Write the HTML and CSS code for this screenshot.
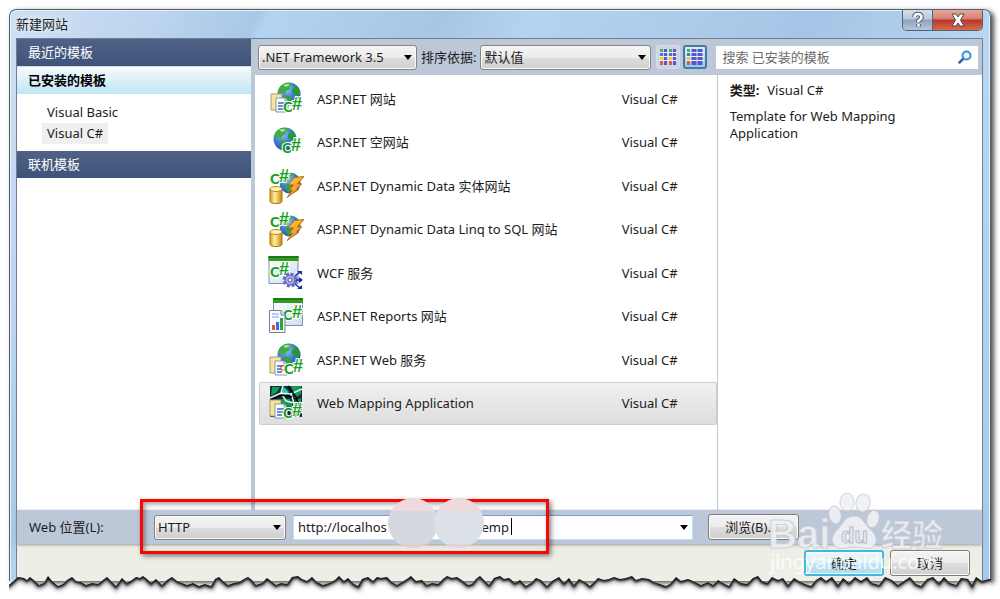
FILE: index.html
```html
<!DOCTYPE html>
<html lang="zh-CN">
<head>
    <meta charset="UTF-8">
    <meta name="viewport" content="width=device-width, initial-scale=1.0">
    <title>新建网站</title>
    <link rel="stylesheet" href="styles.css">
</head>
<body>
    <!-- Shared icon parts -->
    <svg class="defs" width="0" height="0" aria-hidden="true">
        <defs>
            <radialGradient id="sea" cx="40%" cy="30%" r="75%">
                <stop offset="0" stop-color="#8fc4f5"/>
                <stop offset=".5" stop-color="#3f7fd8"/>
                <stop offset="1" stop-color="#1c4fa8"/>
            </radialGradient>
            <linearGradient id="gold">
                <stop offset="0" stop-color="#d99a1c"/>
                <stop offset=".4" stop-color="#fff0a0"/>
                <stop offset="1" stop-color="#c98208"/>
            </linearGradient>
            <linearGradient id="flash" x2="1" y2="1">
                <stop offset="0" stop-color="#ffd84a"/>
                <stop offset="1" stop-color="#e8720c"/>
            </linearGradient>
            <linearGradient id="pane" x2="1" y2="1">
                <stop offset="0" stop-color="#ffffff"/>
                <stop offset="1" stop-color="#cfdcf0"/>
            </linearGradient>
            <symbol id="globe" viewBox="0 0 24 24">
                <circle cx="12" cy="12" r="11.5" fill="url(#sea)"/>
                <path d="M3 5 Q7 0 13 1 L15 3 L12 5 L13 7 L9 9 L8 12 L4 10 L2 12 Q0 9 3 5Z" fill="#3fae3c"/>
                <path d="M16 2 Q22 5 23 11 L21 15 L18 12 L15 11 L15 7 L18 6Z" fill="#279a2c"/>
                <path d="M7 13 L12 14 L15 17 L12 20 L11 23 Q8 21 8 18Z" fill="#36a534"/>
                <path d="M6 3 Q10 1 13 3 L9 5Z" fill="#a9e29a"/>
            </symbol>
            <symbol id="pages" viewBox="0 0 20 20">
                <path d="M1 1H12V17H1Z" fill="#f8e39a" stroke="#a99b78"/>
                <path d="M6 5H15L18 8V19H6Z" fill="#fff" stroke="#8292b8"/>
                <path d="M15 5V8H18" fill="#dbe5f6" stroke="#8292b8"/>
                <path d="M8 10H15M8 13H15M8 16H13" stroke="#3864c8" stroke-width="1.5"/>
            </symbol>
            <symbol id="cylinder" viewBox="0 0 14 18">
                <path d="M1 3V15Q1 17.500 7 17.500T13 15V3Z" fill="url(#gold)" stroke="#a87412"/>
                <ellipse cx="7" cy="3" rx="6" ry="2.500" fill="#fff3b8" stroke="#b8861c"/>
            </symbol>
            <symbol id="bolt" viewBox="0 0 18 22">
                <path d="M9 2L18 1L12 8H16L11 13H13L2 21L7 14H4L8 9H3Z" fill="url(#flash)" stroke="#b85a10" stroke-width=".8"/>
            </symbol>
            <symbol id="window" viewBox="0 0 30 28">
                <path d="M.5 .5H29.500V27.500H.5Z" fill="url(#pane)" stroke="#7f90ad"/>
                <path d="M0 0H30V5H0Z" fill="#329b22"/>
                <path d="M0 0H30V2H0Z" fill="#1d7a14"/>
            </symbol>
            <symbol id="mark" viewBox="0 0 24 24">
                <text x="1" y="20" class="mark">C<tspan dx="-2" dy="-2" class="sharp">#</tspan></text>
            </symbol>
            <symbol id="dynamic" viewBox="0 0 36 36">
                <use href="#globe" x="11" y="4" width="22" height="22"/>
                <use href="#bolt" x="17" y="7" width="19" height="24"/>
                <use href="#cylinder" x="1" y="18" width="14" height="18"/>
                <use href="#mark" x="1" y="-4" width="24" height="24"/>
            </symbol>
        </defs>
    </svg>

    <main class="dialog">
        <header class="titlebar">
            <h1>新建网站</h1>
            <div class="window-buttons">
                <button type="button" class="help" aria-label="帮助">
                    <svg width="16" height="18" viewBox="0 0 16 18">
                        <path d="M4.500 6Q4.500 3 8 3T11.500 6Q11.500 8 8.500 9.500V11M8.500 13V15.500" fill="none" stroke="#4d5868" stroke-width="4.500"/>
                        <path d="M4.500 6Q4.500 3 8 3T11.500 6Q11.500 8 8.500 9.500V11M8.500 13V15.500" fill="none" stroke="#fff" stroke-width="2.500"/>
                    </svg>
                </button>
                <button type="button" class="close" aria-label="关闭">
                    <svg width="16" height="14" viewBox="0 0 16 14">
                        <path d="M2 1H6L8 4L10 1H14L10.500 7L14 13H10L8 10L6 13H2L5.500 7Z" fill="#fff" stroke="#55464e"/>
                    </svg>
                </button>
            </div>
        </header>

        <div class="content">
            <div class="browser">
                <nav class="sidebar">
                    <h2>最近的模板</h2>
                    <h2 class="active">已安装的模板</h2>
                    <ul>
                        <li><a href="#">Visual Basic</a></li>
                        <li><a href="#" class="selected">Visual C#</a></li>
                    </ul>
                    <h2>联机模板</h2>
                </nav>

                <div class="right">
                    <div class="toolbar">
                        <span class="select framework">
                            <select aria-label="框架"><option>.NET Framework 3.5</option></select>
                        </span>
                        <label for="sort">排序依据:</label>
                        <span class="select sort">
                            <select id="sort"><option>默认值</option></select>
                        </span>
                        <button type="button" class="view" aria-label="小图标">
                            <svg width="18" height="18" viewBox="0 0 18 18" fill="none" stroke-width="3">
                                <path d="M2.500 1V17M11.500 1V17" stroke="#5aa56a"/>
                                <path d="M2.500 5V17M11.500 5V17" stroke="#4a6fe0"/>
                                <path d="M2.500 9V17M11.500 9V17" stroke="#e8d238"/>
                                <path d="M2.500 13V17M11.500 13V17" stroke="#e85a3a"/>
                                <path d="M6.500 1V17M15.500 1V17" stroke="#5a55c8"/>
                                <path d="M0 4.500H18M0 8.500H18M0 12.500H18" stroke="#eef2fa" stroke-width="1"/>
                            </svg>
                        </button>
                        <button type="button" class="view pressed" aria-label="中等图标">
                            <svg width="18" height="18" viewBox="0 0 18 18" fill="none" stroke-width="3">
                                <path d="M2.500 1V17" stroke="#5aa56a"/>
                                <path d="M2.500 5V17" stroke="#4a6fe0"/>
                                <path d="M2.500 9V17" stroke="#e8d238"/>
                                <path d="M2.500 13V17" stroke="#e85a3a"/>
                                <path d="M8 1V17M14 1V17" stroke="#5a55c8" stroke-width="5"/>
                                <path d="M0 4.500H18M0 8.500H18M0 12.500H18" stroke="#eef2fa" stroke-width="1"/>
                            </svg>
                        </button>
                        <div class="search">
                            <input type="text" placeholder="搜索 已安装的模板" aria-label="搜索 已安装的模板">
                            <svg width="14" height="14" viewBox="0 0 14 14" fill="none">
                                <path d="M6 8L1.500 12.500" stroke="#3a62b0" stroke-width="2.500" stroke-linecap="round"/>
                                <circle cx="8.500" cy="5.500" r="4" fill="#e4f2fc" stroke="#3f8fd0" stroke-width="2"/>
                            </svg>
                        </div>
                    </div>

                    <div class="panes">
                        <ul class="templates">
                            <li>
                                <svg class="icon" viewBox="0 0 36 36">
                                    <use href="#globe" x="9" y="1" width="24" height="24"/>
                                    <use href="#pages" x="2" y="12" width="20" height="20"/>
                                    <use href="#mark" x="14" y="11" width="24" height="24"/>
                                </svg>
                                <span>ASP.NET 网站</span><span class="lang">Visual C#</span>
                            </li>
                            <li>
                                <svg class="icon" viewBox="0 0 36 36">
                                    <use href="#globe" x="5" y="3" width="24" height="24"/>
                                    <use href="#mark" x="13" y="9" width="24" height="24"/>
                                </svg>
                                <span>ASP.NET 空网站</span><span class="lang">Visual C#</span>
                            </li>
                            <li>
                                <svg class="icon" viewBox="0 0 36 36"><use href="#dynamic" width="36" height="36"/></svg>
                                <span>ASP.NET Dynamic Data 实体网站</span><span class="lang">Visual C#</span>
                            </li>
                            <li>
                                <svg class="icon" viewBox="0 0 36 36"><use href="#dynamic" width="36" height="36"/></svg>
                                <span>ASP.NET Dynamic Data Linq to SQL 网站</span><span class="lang">Visual C#</span>
                            </li>
                            <li>
                                <svg class="icon" viewBox="0 0 36 36">
                                    <use href="#window" x="0" y="1" width="31" height="28"/>
                                    <use href="#mark" x="1" y="2" width="24" height="24"/>
                                    <circle cx="22" cy="25" r="6" fill="none" stroke="#6b6ec0" stroke-width="3" stroke-dasharray="3 1.700"/>
                                    <circle cx="22" cy="25" r="5" fill="#a9ace8" stroke="#5356ac"/>
                                    <circle cx="22" cy="25" r="2" fill="#eef" stroke="#5356ac"/>
                                    <path d="M28 25H34M27 21L32 17M27 29L32 33" stroke="#2228a8" stroke-width="1.500"/>
                                    <path d="M31 22L35 25L31 28ZM29 16H34V20ZM29 34H34V30Z" fill="#2228a8"/>
                                </svg>
                                <span>WCF 服务</span><span class="lang">Visual C#</span>
                            </li>
                            <li>
                                <svg class="icon" viewBox="0 0 36 36">
                                    <use href="#window" x="5" y="0" width="30" height="28"/>
                                    <use href="#mark" x="14" y="2" width="24" height="24"/>
                                    <path d="M1.500 12.500H13L17 16.500V34.500H1.500Z" fill="#f8fbff" stroke="#70809f"/>
                                    <path d="M13 12V17H17" fill="#dbe5f6" stroke="#70809f"/>
                                    <path d="M4 16H11M4 19H11" stroke="#7ba5e0"/>
                                    <path d="M4 27H7V32H4Z" fill="#e8552c"/>
                                    <path d="M8 24H11V32H8Z" fill="#2f70e0"/>
                                    <path d="M12 20H15V32H12Z" fill="#2da838"/>
                                </svg>
                                <span>ASP.NET Reports 网站</span><span class="lang">Visual C#</span>
                            </li>
                            <li>
                                <svg class="icon" viewBox="0 0 36 36">
                                    <use href="#globe" x="9" y="1" width="24" height="24"/>
                                    <use href="#pages" x="1" y="14" width="20" height="20"/>
                                    <path d="M13 24H17V28H13Z" fill="#fff" stroke="#c33"/>
                                    <use href="#mark" x="15" y="12" width="24" height="24"/>
                                </svg>
                                <span>ASP.NET Web 服务</span><span class="lang">Visual C#</span>
                            </li>
                            <li class="selected">
                                <svg class="icon" viewBox="0 0 36 36">
                                    <path d="M2 1H34V32H2Z" fill="#0e3038"/>
                                    <path d="M4 2H12L9 7L3 11ZM23 1H33V9L27 13ZM13 14H22L25 22L15 21ZM27 16L33 13V26H30Z" fill="#149a54"/>
                                    <path d="M16 2L21 7L17 11H12Z" fill="#26c8a8"/>
                                    <path d="M2 13L13 8L23 9L34 4M15 1L13 8L18 16L26 18L25 30M23 9L26 18" fill="none" stroke="#e6f2f0" stroke-width="1.500"/>
                                    <path d="M2 15L14 10L24 12M20 1L28 12L33 28" fill="none" stroke="#000" stroke-width="1.500"/>
                                    <use href="#pages" x="1" y="14" width="20" height="20"/>
                                    <use href="#mark" x="14" y="13" width="24" height="24"/>
                                </svg>
                                <span>Web Mapping Application</span><span class="lang">Visual C#</span>
                            </li>
                        </ul>
                        <aside class="details">
                            <p><strong>类型:</strong>Visual C#</p>
                            <p>Template for Web Mapping Application</p>
                        </aside>
                    </div>
                </div>
            </div>

            <div class="location">
                <label for="protocol">Web 位置(L):</label>
                <span class="select protocol">
                    <select id="protocol"><option>HTTP</option></select>
                </span>
                <span class="select address">
                    <input type="text" aria-label="Web 位置" value="http://localhos                            emp">
                </span>
                <button type="button" class="button browse">浏览(B)...</button>
            </div>

            <footer class="actions">
                <button type="button" class="button default">确定</button>
                <button type="button" class="button">取消</button>
            </footer>
        </div>
    </main>

    <!-- Annotations on top of the dialog -->
    <div class="highlight"></div>
    <i class="caret"></i>
    <div class="blot first"></div>
    <div class="blot second"></div>

    <svg class="watermark" width="184" height="90" viewBox="0 0 184 90" aria-hidden="true">
        <g class="logo">
            <ellipse cx="67" cy="23" rx="6" ry="9" transform="rotate(-12 67 23)"/>
            <ellipse cx="79" cy="10" rx="7" ry="9"/>
            <ellipse cx="95" cy="11" rx="7" ry="9" transform="rotate(10 95 11)"/>
            <ellipse cx="105" cy="27" rx="6" ry="9" transform="rotate(15 105 27)"/>
            <path d="M86 24C94 24 96 31 101 36C106 41 109 44 108 49C107 56 101 57 96 56C91 55 88 55 83 55C77 56 71 58 67 54C62 49 64 43 69 38C75 32 77 24 86 24Z"/>
            <text x="0" y="56" class="bai">Bai</text>
            <text x="113" y="54" class="jingyan">经验</text>
        </g>
        <text x="73" y="51" class="du">du</text>
        <text x="2" y="77" class="site">jingyanbaidu.com</text>
    </svg>

    <!-- Torn bottom edge -->
    <svg class="torn" viewBox="0 0 982 30" preserveAspectRatio="none" aria-hidden="true">
        <defs>
            <path id="tear" d="M-20 60V16H0L9 8L15 9L18 11L21 8L26 12L30 16L35 14L39 7L43 12L49 17L54 15L58 11L63 8L67 12L72 13L77 16L83 14L89 15L94 11L98 8L102 12L107 17L113 9L118 14L123 11L127 8L131 9L134 7L138 10L142 14L147 10L153 16L158 11L163 8L168 12L173 14L178 16L184 14L190 17L196 15L202 17L206 10L210 8L214 12L219 16L225 14L230 13L235 10L239 8L243 11L247 16L253 14L258 9L262 12L267 16L272 14L278 15L283 8L289 7L293 10L298 12L303 8L308 13L314 16L320 14L326 11L330 7L335 12L339 9L345 15L349 17L353 10L359 8L364 12L368 8L372 9L378 8L383 13L388 16L393 13L398 10L402 7L407 12L413 11L418 16L423 14L429 15L434 10L438 7L443 9L448 8L454 12L459 16L463 15L467 10L471 7L476 12L480 16L485 9L491 7L495 10L500 9L506 14L511 11L517 17L522 14L527 9L532 11L538 17L543 12L550 8L555 14L560 9L565 16L570 10L576 13L581 17L585 13L589 9L595 11L600 10L605 8L611 10L617 9L623 7L627 11L633 9L640 10L645 13L651 15L657 17L661 15L667 8L672 12L679 10L684 12L692 16L699 13L704 16L709 11L714 14L720 17L725 9L732 14L738 15L744 9L749 7L753 12L758 14L763 8L769 11L774 9L779 16L785 9L790 12L796 15L802 17L807 11L812 8L817 12L823 8L829 16L834 9L840 14L846 8L852 12L858 8L863 14L870 16L876 8L883 11L889 16L895 12L901 8L907 15L912 17L918 10L924 8L930 14L935 8L941 14L947 16L952 9L959 10L963 16L967 8L973 12L980 10H1010V60Z"/>
            <clipPath id="below"><use href="#tear"/></clipPath>
        </defs>
        <use href="#tear" class="paper"/>
        <g clip-path="url(#below)">
            <use href="#tear" class="shade"/>
            <use href="#tear" class="edge"/>
        </g>
    </svg>
</body>
</html>
```
FILE: styles.css
```css
* {
    box-sizing: border-box;
}
body {
    position: relative;
    display: flex;
    flex-direction: column;
    min-height: 100vh;
    margin: 0;
    padding: 9px 9px 18px;
    background-color: #fff;
    color: #1c1c1c;
    font: 13px/18px "Noto Sans", "Noto Sans CJK SC", sans-serif;
}
h1, h2, p, ul {
    margin: 0;
    padding: 0;
    font-size: 13px;
    font-weight: normal;
    list-style: none;
}
input, select, button {
    font: inherit;
    color: inherit;
}
.defs {
    position: absolute;
}

/* Window frame */
.dialog {
    flex: 1;
    display: flex;
    flex-direction: column;
    padding: 0 7px 0 6px;
    border: 1px solid #56616e;
    border-bottom: 0;
    border-radius: 7px 7px 0 0;
    background: linear-gradient(115deg, #cfe0f3 0, #bcd4ee 12%, #a9c8e8 20%, #b4d3f0 21%, #a8c6e4 35%, #b5d3f0 42%, #a6c5e6 65%, #b9d6f1 80%, #a9c9e8 100%);
    box-shadow: inset 0 0 0 1px #e4f0fb, 3px 2px 5px rgba(0, 0, 0, 0.7);
}
.titlebar {
    display: flex;
    justify-content: space-between;
    height: 28px;
}
.titlebar h1 {
    padding-top: 5px;
    text-shadow: 0 0 6px #fff;
}
.window-buttons {
    display: flex;
    height: 21px;
    border: 1px solid #566270;
    border-top: 0;
    border-radius: 0 0 5px 5px;
    overflow: hidden;
}
.window-buttons button {
    display: flex;
    align-items: center;
    justify-content: center;
    padding: 0;
    border: 0;
}
.help {
    width: 29px;
    background: linear-gradient(#d3e0ee 0, #b9c9db 45%, #8fa4bc 50%, #b3c8de 100%);
}
.window-buttons .close {
    width: 50px;
    border-left: 1px solid #566270;
    background: linear-gradient(#e6a99c 0, #d47f70 45%, #b8362a 50%, #d96a4c 100%);
}

/* Dialog content */
.content {
    flex: 1;
    display: flex;
    flex-direction: column;
    border: 1px solid #6d7f95;
    border-bottom: 0;
    background-color: #efeee6;
}
.browser {
    flex: 1;
    display: flex;
    gap: 4px;
    background-color: #bcc7d8;
}
.sidebar {
    width: 234px;
    background-color: #fff;
}
.sidebar h2 {
    height: 27px;
    padding: 0 11px;
    line-height: 27px;
    color: #fff;
    background: linear-gradient(#4f6185, #40537a);
}
.sidebar .active {
    height: 28px;
    border-top: 1px solid #d5dce6;
    font-weight: bold;
    color: #000;
    background: linear-gradient(#f6fafc, #bfe6f5);
}
.sidebar ul {
    display: flex;
    flex-direction: column;
    align-items: flex-start;
    padding: 8px 25px 7px;
}
.sidebar a {
    display: block;
    padding: 1px 5px 2px;
    color: inherit;
    text-decoration: none;
}
.sidebar .selected {
    background-color: #efefef;
}
.right {
    flex: 1;
    display: flex;
    flex-direction: column;
    min-width: 0;
}
.toolbar {
    display: flex;
    align-items: center;
    height: 36px;
    padding: 0 4px 0 3px;
}
.toolbar label {
    padding: 0 4px;
    white-space: nowrap;
}
.select {
    position: relative;
    display: block;
}
.select::after {
    content: "";
    position: absolute;
    top: 10px;
    right: 5px;
    border: 4px solid transparent;
    border-top: 5px solid #000;
    border-bottom: 0;
    pointer-events: none;
}
.select select {
    display: block;
    width: 100%;
    height: 25px;
    padding: 0 3px;
    border: 1px solid #858585;
    border-radius: 3px;
    appearance: none;
    background: linear-gradient(#f4f4f4 0, #ebebeb 50%, #dddddd 51%, #cfcfcf 100%);
    box-shadow: inset 0 0 0 1px #f8f8f8;
}
.framework {
    width: 159px;
}
.sort {
    width: 171px;
}
.view {
    display: flex;
    align-items: center;
    justify-content: center;
    width: 24px;
    height: 24px;
    margin-left: 3px;
    padding: 0;
    border: 1px solid #d5dde9;
    border-radius: 3px;
    background-color: #ccd5e3;
}
.sort + .view {
    margin-left: 5px;
}
.pressed {
    border: 2px solid #48789f;
    background: linear-gradient(#d8effb, #8ecdec);
}
.search {
    flex: 1;
    display: flex;
    align-items: center;
    height: 23px;
    margin-left: 9px;
    padding-right: 6px;
    background-color: #fff;
}
.search input {
    flex: 1;
    min-width: 0;
    padding: 0 6px;
    border: 0;
    background: none;
}
.search input::placeholder {
    color: #6b6b6b;
}
.panes {
    flex: 1;
    display: flex;
}
.templates {
    flex: 1;
    display: grid;
    grid-template-rows: repeat(8, 1fr);
    align-self: flex-start;
    height: 350px;
    padding: 2px 0 0 4px;
}
.templates li {
    display: grid;
    grid-template-columns: 36px 1fr 94px;
    align-items: center;
    column-gap: 13px;
    padding-left: 8px;
    border: 1px solid transparent;
    border-radius: 2px;
}
.templates .selected {
    border-color: #cfcfcf;
    background: linear-gradient(#f0f0f0, #dedede);
}
.panes, .templates {
    background-color: #fff;
}
.icon {
    width: 36px;
    height: 36px;
}
.mark {
    font: bold 15px "Liberation Sans", sans-serif;
    fill: #18a01c;
    stroke: #fff;
    stroke-width: 2px;
    paint-order: stroke;
}
.sharp {
    font-size: 18px;
    font-style: italic;
}
.details {
    width: 36.5%;
    padding: 7px 12px;
    border-left: 1px solid #bcc7d8;
}
.details p {
    max-width: 200px;
    margin-bottom: 9px;
    line-height: 17px;
}
.details strong {
    margin-right: 8px;
}

/* Location row and buttons */
.location {
    display: flex;
    align-items: center;
    height: 34px;
    padding: 0 12px;
    background-color: #bcc7d8;
    box-shadow: 0 1px 3px #9a9a94;
}
.location label {
    width: 125px;
}
.protocol {
    width: 132px;
}
.address {
    width: 400px;
    margin-left: 7px;
}
.address input {
    display: block;
    width: 100%;
    height: 25px;
    padding: 0 4px;
    border: 1px solid #c3e0f3;
    border-top-color: #6f9fca;
    background-color: #fff;
}
.button {
    width: 80px;
    height: 26px;
    padding: 0;
    border: 1px solid #7d7d7d;
    border-radius: 3px;
    background: linear-gradient(#f4f4f4 0, #ebebeb 50%, #dddddd 51%, #cfcfcf 100%);
    box-shadow: inset 0 0 0 1px #fafafa;
}
.browse {
    width: 91px;
    margin-left: 15px;
    padding-right: 4px;
}
.actions {
    display: flex;
    justify-content: flex-end;
    gap: 6px;
    height: 37px;
    padding: 6px 12px;
}
.default {
    border: 2px solid #3fb8e4;
    background: linear-gradient(#eef7fb 0, #dcf0f9 50%, #c0e4f4 51%, #b0dcf0 100%);
}

/* Overlays */
.highlight {
    position: absolute;
    left: 140px;
    bottom: 45px;
    width: 409px;
    height: 55px;
    border: 3px solid #f80606;
    box-shadow: 2px 2px 5px rgba(0, 0, 0, 0.5), inset 2px 2px 5px rgba(0, 0, 0, 0.4);
    pointer-events: none;
}
.caret {
    position: absolute;
    left: 511px;
    bottom: 64px;
    width: 1px;
    height: 17px;
    background-color: #000;
}
.blot {
    position: absolute;
    bottom: 51px;
    width: 50px;
    height: 50px;
    border-radius: 50%;
    background: linear-gradient(#ecdadd 0 13px, #d5d9df 13px 46px, #dfcfd1 46px);
}
.first {
    left: 388px;
}
.second {
    left: 434px;
    background: linear-gradient(#ecdadd 0 13px, #dce0e7 13px 46px, #e2d3d6 46px);
}
.watermark {
    position: absolute;
    right: 48px;
    bottom: 17px;
    pointer-events: none;
}
.logo {
    fill: #eff1f5;
    fill-opacity: 0.9;
    stroke: #c4c8cf;
    stroke-opacity: 0.8;
}
.bai {
    font: bold 40px "Liberation Sans", sans-serif;
}
.jingyan {
    font: bold 31px "Noto Sans CJK SC", sans-serif;
}
.site {
    font: 20px "Noto Sans", sans-serif;
    fill: #fff;
    fill-opacity: 0.8;
}
.du {
    font: bold 22px "Liberation Sans", sans-serif;
    fill: #e9ecf1;
    stroke: #b4bbc7;
}
.torn {
    position: absolute;
    left: 9px;
    bottom: 0;
    width: calc(100% - 18px);
    height: 30px;
    pointer-events: none;
}
.paper {
    fill: #fff;
}
.shade {
    fill: none;
    stroke: #999;
    stroke-width: 8px;
    filter: blur(2px);
}
.edge {
    fill: none;
    stroke: #111;
    stroke-width: 4px;
    filter: blur(1px);
}
```
